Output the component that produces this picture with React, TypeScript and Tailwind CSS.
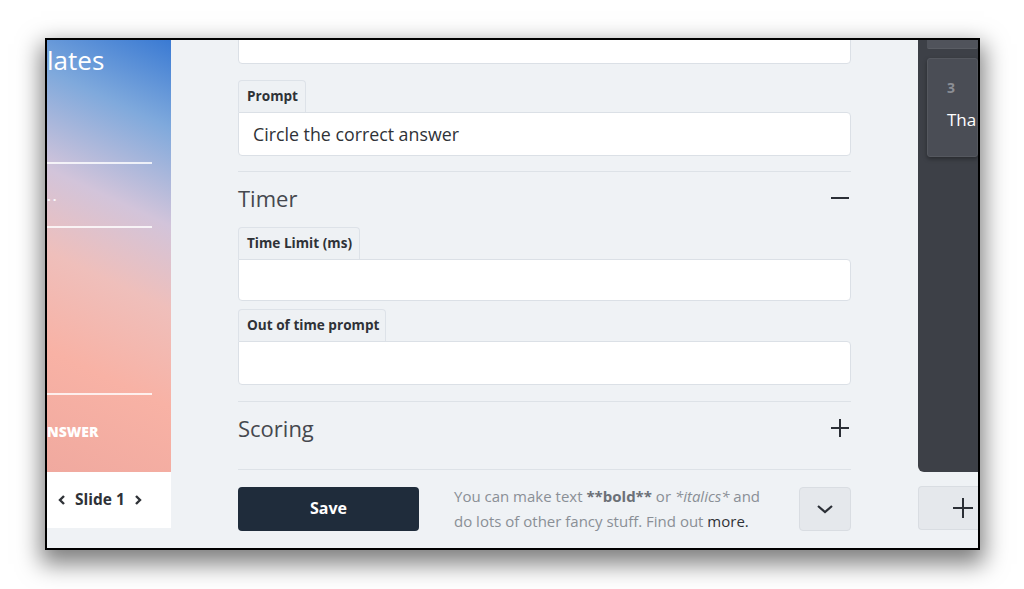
import React from "react";

const font = { fontFamily: "'Open Sans', 'Noto Sans', sans-serif" };

function Tab({ label, w }: { label: string; w: string }) {
  return (
    <div
      className={`${w} h-[32px] border border-b-0 border-[#dde2e8] rounded-t-[4px] bg-[#eef1f4] flex items-center pl-[8px] text-[13.6px] font-bold text-[#2f3237]`}
    >
      {label}
    </div>
  );
}

function Input({ h, children }: { h: string; children?: React.ReactNode }) {
  return (
    <div
      className={`${h} bg-white border border-[#dbe0e6] rounded-[4px] rounded-tl-none flex items-center pl-[14px] text-[17.8px] text-[#2f3237]`}
    >
      {children}
    </div>
  );
}

export default function App() {
  return (
    <div className="w-[1024px] h-[589px] bg-white overflow-hidden" style={font}>
      <div className="pt-[38px] pl-[45px]">
        <div className="w-[935px] h-[512px] border-2 border-black bg-[#eff2f5] overflow-hidden flex shadow-[0_10px_22px_4px_rgba(0,0,0,0.5)]">
          {/* Left panel */}
          <div className="w-[124px] flex flex-col shrink-0">
            <div className="h-[432px] flex flex-col bg-[linear-gradient(205deg,#3a7ad3_0%,#7fa9dc_18%,#d2c4da_38%,#efbfbb_55%,#f8b2a5_75%,#f0a99f_100%)]">
              <div className="mt-[4px] text-[26px] leading-[32px] text-white">lates</div>
              <div className="mt-[86px] w-[105px] h-[2px] bg-white/80" />
              <div className="mt-[24px] h-[16px] leading-[16px] text-[13px] text-white/90 font-bold tracking-[2px]">..</div>
              <div className="mt-[22px] w-[105px] h-[2px] bg-white/80" />
              <div className="mt-[165px] w-[105px] h-[2px] bg-white/80" />
              <div className="mt-[29px] text-[14px] leading-[16px] font-extrabold text-white">NSWER</div>
            </div>
            <div className="h-[56px] bg-white flex items-center pl-[10px] gap-[8px] text-[15.5px] font-bold text-[#2f3237]">
              <svg width="10" height="12" viewBox="0 0 10 12">
                <path d="M7 2 L3 6 L7 10" fill="none" stroke="#2f3237" strokeWidth="2.4" />
              </svg>
              <span>Slide 1</span>
              <svg width="10" height="12" viewBox="0 0 10 12">
                <path d="M3 2 L7 6 L3 10" fill="none" stroke="#2f3237" strokeWidth="2.4" />
              </svg>
            </div>
          </div>

          {/* Main */}
          <div className="flex-1 pl-[67px]">
            <div className="w-[613px] flex flex-col">
              <div className="-mt-[20px] h-[44px] bg-white border border-[#dbe0e6] rounded-[4px]" />
              <div className="mt-[16px]">
                <Tab label="Prompt" w="w-[68px]" />
                <Input h="h-[44px]">Circle the correct answer</Input>
              </div>
              <div className="mt-[15px] h-px bg-[#dde2e7]" />
              <div className="h-[52px] flex items-center justify-between">
                <span className="text-[22px] font-normal text-[#45484e]">Timer</span>
                <div className="w-[18px] h-[2px] bg-[#2b2f36] mr-[2px]" />
              </div>
              <div className="mt-[3px]">
                <Tab label="Time Limit (ms)" w="w-[122px]" />
                <Input h="h-[42px]" />
              </div>
              <div className="mt-[8px]">
                <Tab label="Out of time prompt" w="w-[148px]" />
                <Input h="h-[44px]" />
              </div>
              <div className="mt-[16px] h-px bg-[#dde2e7]" />
              <div className="h-[52px] flex items-center justify-between">
                <span className="text-[22px] font-normal text-[#45484e]">Scoring</span>
                <svg width="20" height="20" viewBox="0 0 20 20" className="mr-[1px]">
                  <path d="M10 1 V19 M1 10 H19" stroke="#2b2f36" strokeWidth="2" />
                </svg>
              </div>
              <div className="mt-[15px] h-px bg-[#dde2e7]" />
              <div className="mt-[14px] flex items-center">
                <div className="w-[181px] h-[44px] rounded-[4px] bg-[#1f2c3b] flex items-center justify-center text-white font-bold text-[16px] pb-[2px]">
                  Save
                </div>
                <div className="ml-[35px] text-[15px] leading-[25px] text-[#8a8f96] whitespace-nowrap">
                  You can make text <b className="font-bold text-[#6b7077]">**bold**</b> or <i>*italics*</i> and
                  <br />
                  do lots of other fancy stuff. Find out <span className="text-[#2f3237]">more.</span>
                </div>
                <div className="ml-auto w-[52px] h-[44px] rounded-[4px] bg-[#e5e8ec] border border-[#d9dde2] flex items-center justify-center">
                  <svg width="18" height="12" viewBox="0 0 18 12">
                    <path d="M2 3 L9 9 L16 3" fill="none" stroke="#2b2f36" strokeWidth="2.2" />
                  </svg>
                </div>
              </div>
            </div>
          </div>

          {/* Right panel */}
          <div className="w-[60px] shrink-0 flex flex-col">
            <div className="h-[432px] bg-[#3d4047] rounded-bl-[6px] pl-[9px] flex flex-col">
              <div className="h-[9px] bg-[#50535b] border-b border-[#5a5d64] rounded-b-[2px]" />
              <div className="mt-[9px] h-[99px] bg-[#4a4d55] border border-[#55585f] rounded-[3px] shadow-[0_2px_4px_rgba(0,0,0,0.35)] pl-[19px] pt-[20px] overflow-hidden">
                <div className="text-[14px] font-bold text-[#8c8f96] leading-[18px]">3</div>
                <div className="mt-[12px] text-[17px] text-white leading-[22px] whitespace-nowrap">Thanks</div>
              </div>
            </div>
            <div className="mt-[14px] h-[44px] bg-[#e5e8ec] border border-[#d9dde2] border-r-0 rounded-l-[4px] flex items-center pl-[33px]">
              <svg width="22" height="22" viewBox="0 0 22 22">
                <path d="M11 1 V21 M1 11 H21" stroke="#2b2f36" strokeWidth="2" />
              </svg>
            </div>
          </div>
        </div>
      </div>
    </div>
  );
}
